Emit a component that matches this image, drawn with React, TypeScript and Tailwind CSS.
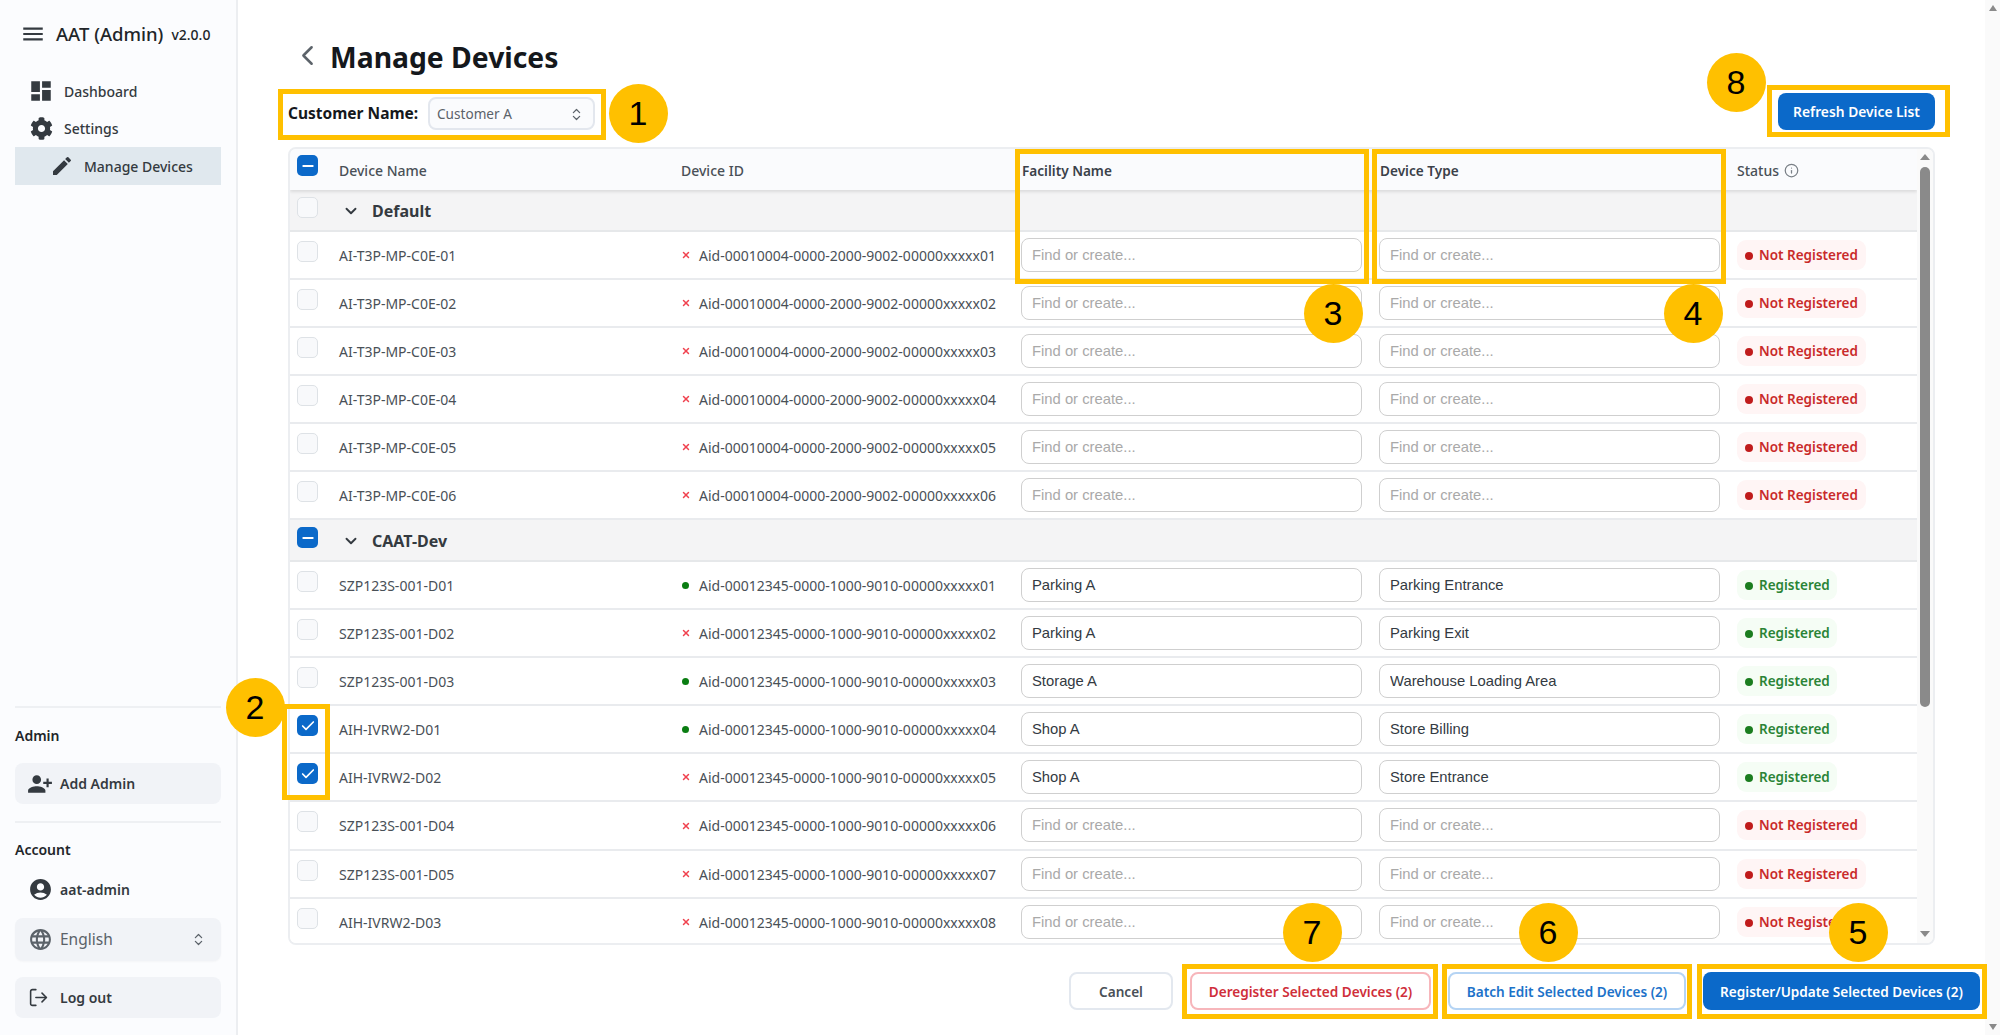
import React from "react";
import { ChevronLeft, ChevronDown, ChevronsUpDown, Info, LogOut, X, Check, Minus } from "lucide-react";
import { MdMenu, MdDashboard, MdEdit, MdAccountCircle, MdLanguage, MdPersonAdd } from "react-icons/md";
import { FaCog } from "react-icons/fa";

type Row = { name: string; id: string; online: boolean; facility?: string; type?: string; registered: boolean; checked?: boolean; tall?: boolean };

const group1: Row[] = [1, 2, 3, 4, 5, 6].map((n) => ({
  name: `AI-T3P-MP-C0E-0${n}`,
  id: `Aid-00010004-0000-2000-9002-00000xxxxx0${n}`,
  online: false,
  registered: false,
}));

const p = "Aid-00012345-0000-1000-9010-00000xxxxx0";
const group2: Row[] = [
  { name: "SZP123S-001-D01", id: p + "1", online: true, facility: "Parking A", type: "Parking Entrance", registered: true },
  { name: "SZP123S-001-D02", id: p + "2", online: false, facility: "Parking A", type: "Parking Exit", registered: true },
  { name: "SZP123S-001-D03", id: p + "3", online: true, facility: "Storage A", type: "Warehouse Loading Area", registered: true },
  { name: "AIH-IVRW2-D01", id: p + "4", online: true, facility: "Shop A", type: "Store Billing", registered: true, checked: true },
  { name: "AIH-IVRW2-D02", id: p + "5", online: false, facility: "Shop A", type: "Store Entrance", registered: true, checked: true },
  { name: "SZP123S-001-D04", id: p + "6", online: false, registered: false, tall: true },
  { name: "SZP123S-001-D05", id: p + "7", online: false, registered: false },
  { name: "AIH-IVRW2-D03", id: p + "8", online: false, registered: false },
];

const cols = "grid grid-cols-[49px_342px_340px_358px_358px_1fr]";

function Box({ state }: { state?: "on" | "mixed" }) {
  if (state) {
    return (
      <span className="flex h-[21px] w-[21px] items-center justify-center rounded-[5px] bg-[#0b69c9] text-white">
        {state === "on" ? <Check size={16} strokeWidth={2.5} /> : <Minus size={16} strokeWidth={3} />}
      </span>
    );
  }
  return <span className="block h-[21px] w-[21px] rounded-[5px] border border-[#dee2e6] bg-[#f8f9fb]" />;
}

function Field({ value }: { value?: string }) {
  return (
    <input
      readOnly
      value={value ?? ""}
      placeholder="Find or create..."
      className="h-[34px] w-[341px] rounded-[8px] border-[1.5px] border-[#cfcfcf] bg-white px-[10px] font-['Liberation_Sans',sans-serif] text-[14.8px] text-[#333a42] outline-none placeholder:text-[#a9a9a9]"
    />
  );
}

function GroupRow({ name, state }: { name: string; state?: "mixed" }) {
  return (
    <div className="flex h-[42px] shrink-0 border-b-2 border-[#e6e8ea] bg-[#f4f4f5]">
      <div className="w-[49px] pl-[7px] pt-[7px]">
        <Box state={state} />
      </div>
      <div className="flex items-center pl-[3px] pt-[2px] text-[16px] font-bold text-[#343a40]">
        <ChevronDown size={18} strokeWidth={2.5} className="mr-[12px]" />
        {name}
      </div>
    </div>
  );
}

function DeviceRow({ r }: { r: Row }) {
  return (
    <div className={`${cols} ${r.tall ? "h-[49px]" : "h-[48px]"} shrink-0 border-b-2 border-[#e9ebee] bg-white`}>
      <div className="pl-[7px] pt-[9px]">
        <Box state={r.checked ? "on" : undefined} />
      </div>
      <div className="flex items-center text-[14px] text-[#495057]">{r.name}</div>
      <div className="flex items-center text-[14px] text-[#495057]">
        <span className="flex w-[18px] shrink-0 items-center">
          {r.online ? (
            <span className="ml-[1px] h-[7px] w-[7px] rounded-full bg-[#0a7d12]" />
          ) : (
            <X size={10} strokeWidth={3.5} className="text-[#f0424f]" />
          )}
        </span>
        {r.id}
      </div>
      <div className="pt-[6px]">
        <Field value={r.facility} />
      </div>
      <div className="pt-[6px]">
        <Field value={r.type} />
      </div>
      <div className="pt-[8px]">
        {r.registered ? (
          <span className="flex h-[30px] w-[100px] items-center gap-[6px] rounded-[9px] bg-[#f5fdf5] pl-[8px] pt-[1px] text-[13.5px] font-semibold text-[#2a8436]">
            <span className="h-[8px] w-[8px] rounded-full bg-[#1b7d1f]" />
            Registered
          </span>
        ) : (
          <span className="flex h-[30px] w-[129px] items-center gap-[6px] rounded-[9px] bg-[#fff5f5] pl-[8px] pt-[1px] text-[13.5px] font-semibold text-[#c92a2a]">
            <span className="h-[8px] w-[8px] rounded-full bg-[#c01c1c]" />
            Not Registered
          </span>
        )}
      </div>
    </div>
  );
}

function Divider() {
  return <div className="h-[2px] bg-[#eef0f3]" />;
}

function Sidebar() {
  return (
    <aside className="flex w-[238px] shrink-0 flex-col border-r-2 border-[#eceef1] bg-[#fbfcfe] px-[15px] text-[#212529]">
      <div className="flex h-[72px] items-center pb-[5px] pl-[5px] pt-[1px]">
        <MdMenu size={26} className="text-[#343a40]" />
        <span className="ml-[10px] text-[18.5px] font-medium">AAT (Admin)</span>
        <span className="ml-[8px] text-[14px] font-medium">v2.0.0</span>
      </div>
      <div className="flex h-[38px] items-center text-[14px] font-medium text-[#343a40]">
        <MdDashboard size={26} className="ml-[13px] mr-[10px] shrink-0 text-[#343a40]" />
        Dashboard
      </div>
      <div className="flex h-[37px] items-center text-[14px] font-medium text-[#343a40]">
        <FaCog size={23} className="ml-[15px] mr-[11px] shrink-0 text-[#343a40]" />
        Settings
      </div>
      <div className="flex h-[38px] items-center bg-[#e0e8ee] text-[14px] font-medium text-[#343a40]">
        <MdEdit size={24} className="ml-[35px] mr-[10px] shrink-0" />
        Manage Devices
      </div>
      <div className="flex-1" />
      <Divider />
      <div className="mt-[17px] text-[14px] font-semibold">Admin</div>
      <div className="mt-[17px] flex h-[41px] items-center rounded-[8px] bg-[#f1f3f7] pl-[12px] text-[14px] font-semibold text-[#343a40]">
        <MdPersonAdd size={26} className="mr-[7px] -scale-x-100 text-[#343a40]" />
        Add Admin
      </div>
      <div className="mt-[17px]">
        <Divider />
      </div>
      <div className="mt-[16px] text-[14px] font-semibold">Account</div>
      <div className="mt-[15px] flex h-[28px] items-center pl-[13px] text-[14px] font-semibold text-[#343a40]">
        <MdAccountCircle size={25} className="mr-[7px]" />
        aat-admin
      </div>
      <div className="mt-[15px] flex h-[43px] items-center rounded-[8px] bg-[#f1f3f7] pl-[13px] pr-[15px] text-[15.5px] text-[#5b6269] shadow-[0_1px_2px_rgba(0,0,0,0.03)]">
        <MdLanguage size={25} className="mr-[7px]" />
        <span className="flex-1">English</span>
        <ChevronsUpDown size={15} />
      </div>
      <div className="mb-[17px] mt-[16px] flex h-[41px] items-center rounded-[8px] bg-[#f1f3f7] pl-[13px] text-[14px] font-semibold text-[#343a40]">
        <LogOut size={21} strokeWidth={1.8} className="mr-[11px]" />
        Log out
      </div>
    </aside>
  );
}

function DeviceTable() {
  return (
    <div className="mr-[45px] flex h-[798px] overflow-hidden rounded-[8px] border-2 border-[#eceef1] bg-white">
      <div className="min-w-0 flex-1 overflow-hidden">
        <div className={`${cols} relative z-10 h-[41px] bg-[#fafbfd] text-[14px] font-medium text-[#495057] shadow-[0_2px_3px_rgba(0,0,0,0.1)]`}>
          <div className="pl-[7px] pt-[6px]">
            <Box state="mixed" />
          </div>
          <div className="flex items-center pt-[2px]">Device Name</div>
          <div className="flex items-center pt-[2px]">Device ID</div>
          <div className="flex items-center pl-[1px] pt-[4px] text-[13.6px] font-semibold text-[#3a4149]">Facility Name</div>
          <div className="flex items-center pl-[1px] pt-[4px] text-[13.6px] font-semibold text-[#3a4149]">Device Type</div>
          <div className="flex items-center gap-[5px] pt-[2px]">
            Status <Info size={15} className="text-[#7a8087]" />
          </div>
        </div>
        <GroupRow name="Default" />
        {group1.map((r) => (
          <DeviceRow key={r.name} r={r} />
        ))}
        <GroupRow name="CAAT-Dev" state="mixed" />
        {group2.map((r) => (
          <DeviceRow key={r.name} r={r} />
        ))}
      </div>
      <div className="flex w-[16px] shrink-0 flex-col items-center bg-[#fafafa] pt-[5px]">
        <span className="h-0 w-0 border-x-[5px] border-b-[6px] border-x-transparent border-b-[#8a8a8a]" />
        <span className="mt-[7px] h-[540px] w-[10px] rounded-full bg-[#8a8a8a]" />
        <span className="mt-[224px] h-0 w-0 border-x-[5px] border-t-[6px] border-x-transparent border-t-[#8a8a8a]" />
      </div>
    </div>
  );
}

const btn = "flex h-[38px] items-center justify-center rounded-[8px] pt-[2px] text-[13.6px] font-semibold";

function Main() {
  return (
    <main className="flex min-w-0 flex-1 flex-col bg-white pl-[50px] pr-[5px]">
      <div className="flex h-[89px] items-center pb-[8px] pt-[33px]">
        <ChevronLeft size={33} strokeWidth={1.8} className="ml-[3px] -mt-[3px] text-[#5c636a]" />
        <h1 className="ml-[6px] text-[28.3px] font-bold leading-none text-[#15181c]">Manage Devices</h1>
      </div>
      <div className="mr-[45px] flex h-[58px] items-start">
        <div className="mt-[8px] flex items-center">
          <span className="w-[140px] text-[15.5px] font-bold text-[#15181c]">Customer Name:</span>
          <span className="flex h-[33px] w-[167px] items-center justify-between rounded-[8px] border-2 border-[#e3e7ee] bg-[#fafbfd] pl-[7px] pr-[9px] pt-[1px] text-[13.6px] text-[#5b6269]">
            Customer A
            <ChevronsUpDown size={15} />
          </span>
        </div>
        <div className="flex-1" />
        <button className="mt-[4px] h-[37px] w-[157px] rounded-[8px] bg-[#0b69c9] pt-[2px] text-[13.8px] font-semibold text-white">
          Refresh Device List
        </button>
      </div>
      <DeviceTable />
      <div className="mt-[27px] flex justify-end gap-[17px]">
        <button className={`${btn} w-[104px] border-2 border-[#e3e8ef] bg-white text-[#4a5057]`}>Cancel</button>
        <button className={`${btn} w-[241px] border-2 border-[#f7b6bb] bg-white text-[#cf2f3a]`}>Deregister Selected Devices (2)</button>
        <button className={`${btn} w-[238px] border-2 border-[#b5d4f4] bg-white text-[#1c72c9]`}>Batch Edit Selected Devices (2)</button>
        <button className={`${btn} w-[277px] bg-[#0b69c9] text-white`}>Register/Update Selected Devices (2)</button>
      </div>
    </main>
  );
}

function Frame({ x, y, w, h }: { x: number; y: number; w: number; h: number }) {
  return (
    <div
      className="pointer-events-none absolute z-20 border-[5px] border-[#ffc000]"
      style={{ left: x, top: y, width: w, height: h }}
    />
  );
}

function Num({ n, x, y }: { n: number; x: number; y: number }) {
  return (
    <div
      className="absolute z-30 flex h-[59px] w-[59px] items-center justify-center rounded-full bg-[#ffc000] font-['Liberation_Sans',sans-serif] text-[34px] leading-none text-black"
      style={{ left: x - 29.5, top: y - 29.5 }}
    >
      {n}
    </div>
  );
}

export default function App() {
  return (
    <div className="relative flex h-[1035px] w-[2000px] overflow-hidden bg-white font-['Noto_Sans',sans-serif]">
      <Sidebar />
      <Main />
      <div className="flex w-[15px] shrink-0 flex-col items-center justify-between bg-[#fafafa] py-[5px]">
        <span className="h-0 w-0 border-x-[4px] border-b-[6px] border-x-transparent border-b-[#8a8a8a]" />
        <span className="h-0 w-0 border-x-[4px] border-t-[6px] border-x-transparent border-t-[#8a8a8a]" />
      </div>

      <Frame x={278} y={89} w={328} h={51} />
      <Frame x={282} y={704} w={48} h={96} />
      <Frame x={1015} y={149} w={354} h={135} />
      <Frame x={1372} y={149} w={354} h={135} />
      <Frame x={1767} y={85} w={183} h={52} />
      <Frame x={1182} y={964} w={256} h={55} />
      <Frame x={1442} y={964} w={250} h={55} />
      <Frame x={1697} y={964} w={290} h={55} />

      <Num n={1} x={638} y={113} />
      <Num n={2} x={255} y={707} />
      <Num n={3} x={1333} y={313} />
      <Num n={4} x={1693} y={313} />
      <Num n={8} x={1736} y={82} />
      <Num n={5} x={1858} y={932} />
      <Num n={6} x={1548} y={932} />
      <Num n={7} x={1312} y={932} />
    </div>
  );
}
